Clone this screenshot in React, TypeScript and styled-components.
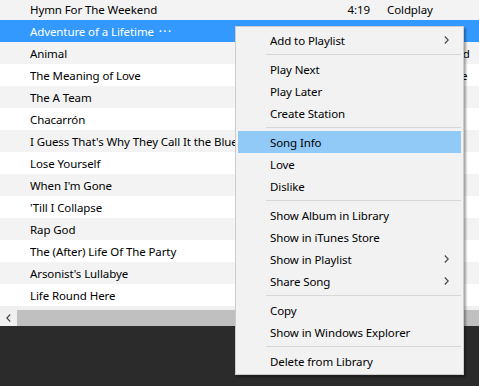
import * as React from 'react';
import styled, { createGlobalStyle } from 'styled-components';

const GlobalStyle = createGlobalStyle`
    html, body {
        margin: 0;
        padding: 0;
        background: #2b2b2b;
    }
    body {
        font-family: "Noto Sans", "Liberation Sans", sans-serif;
        font-size: 11.5px;
        letter-spacing: -0.1px;
        color: #000;
    }
`;

const Window = styled.div`
    position: relative;
    width: 479px;
    height: 386px;
    overflow: hidden;
    background: #2b2b2b;
`;

const TrackList = styled.div`
    height: 306px;
    overflow: hidden;
    background: #fff;
`;

const Rows = styled.div`
    margin-top: -2px;
`;

const Row = styled.div<{ $odd: boolean; $selected?: boolean }>`
    display: flex;
    align-items: center;
    height: 22px;
    padding-left: 30px;
    white-space: nowrap;
    background: ${p => (p.$selected ? '#3399ff' : p.$odd ? '#f3f3f3' : '#fff')};
    color: ${p => (p.$selected ? '#fff' : '#000')};
`;

const NameCell = styled.div`
    width: 310px;
    overflow: hidden;
    display: flex;
    align-items: center;
`;

const Dots = styled.span`
    margin-left: 5px;
    font-size: 7px;
    letter-spacing: 2px;
`;

const TimeCell = styled.div`
    width: 30px;
    text-align: right;
`;

const ArtistCell = styled.div`
    margin-left: 17px;
`;

const HScroll = styled.div`
    display: flex;
    align-items: flex-end;
    height: 20px;
    background: #f0f0f0;
`;

const ScrollButton = styled.div`
    width: 17px;
    height: 16px;
    display: flex;
    align-items: center;
    justify-content: center;
`;

const Thumb = styled.div`
    flex: 1;
    height: 16px;
    background: #c0c0c0;
`;

const Menu = styled.div`
    position: absolute;
    left: 235px;
    top: 26px;
    width: 229px;
    box-sizing: border-box;
    padding: 2px;
    background: #f2f2f2;
    border: 1px solid #cccccc;
    box-shadow: 2px 2px 2px rgba(0, 0, 0, 0.35);
`;

const MenuItem = styled.div<{ $active?: boolean }>`
    display: flex;
    align-items: center;
    justify-content: space-between;
    height: 22px;
    padding: 0 12px 0 32px;
    white-space: nowrap;
    background: ${p => (p.$active ? '#91c9f7' : 'transparent')};
`;

const Separator = styled.div`
    height: 1px;
    margin: 3px 0 3px 28px;
    background: #d7d7d7;
`;

const Chevron: React.FC<{ left?: boolean }> = ({ left }) => (
    <svg width="5" height="8" viewBox="0 0 5 8">
        <path
            d={left ? 'M4.2 0.5 L0.8 4 L4.2 7.5' : 'M0.8 0.5 L4.2 4 L0.8 7.5'}
            fill="none"
            stroke="#444"
            strokeWidth="1.1"
        />
    </svg>
);

// only the columns that show past the menu are filled in
const tracks: [string, string, string][] = [
    ['Hymn For The Weekend', '4:19', 'Coldplay'],
    ['Adventure of a Lifetime', '', ''],
    ['Animal', '', 'Conor Maynard'],
    ['The Meaning of Love', '', 'Depeche Mode'],
    ['The A Team', '', ''],
    ['Chacarrón', '', ''],
    ["I Guess That's Why They Call It the Blues", '', ''],
    ['Lose Yourself', '', ''],
    ["When I'm Gone", '', ''],
    ["'Till I Collapse", '', ''],
    ['Rap God', '', ''],
    ['The (After) Life Of The Party', '', ''],
    ["Arsonist's Lullabye", '', ''],
    ['Life Round Here', '', ''],
];

type Entry = { label: string; sub?: boolean; active?: boolean } | 'sep';

const menu: Entry[] = [
    { label: 'Add to Playlist', sub: true },
    'sep',
    { label: 'Play Next' },
    { label: 'Play Later' },
    { label: 'Create Station' },
    'sep',
    { label: 'Song Info', active: true },
    { label: 'Love' },
    { label: 'Dislike' },
    'sep',
    { label: 'Show Album in Library' },
    { label: 'Show in iTunes Store' },
    { label: 'Show in Playlist', sub: true },
    { label: 'Share Song', sub: true },
    'sep',
    { label: 'Copy' },
    { label: 'Show in Windows Explorer' },
    'sep',
    { label: 'Delete from Library' },
];

export default function App() {
    return (
        <Window>
            <GlobalStyle />
            <TrackList>
                <Rows>
                    {tracks.map(([name, time, artist], i) => (
                        <Row key={name} $odd={i % 2 === 0} $selected={i === 1}>
                            <NameCell>
                                {name}
                                {i === 1 && <Dots>•••</Dots>}
                            </NameCell>
                            <TimeCell>{time}</TimeCell>
                            <ArtistCell>{artist}</ArtistCell>
                        </Row>
                    ))}
                </Rows>
            </TrackList>
            <HScroll>
                <ScrollButton>
                    <Chevron left />
                </ScrollButton>
                <Thumb />
            </HScroll>
            <Menu>
                {menu.map((m, i) =>
                    m === 'sep' ? (
                        <Separator key={i} />
                    ) : (
                        <MenuItem key={i} $active={m.active}>
                            {m.label}
                            {m.sub && <Chevron />}
                        </MenuItem>
                    )
                )}
            </Menu>
        </Window>
    );
}
